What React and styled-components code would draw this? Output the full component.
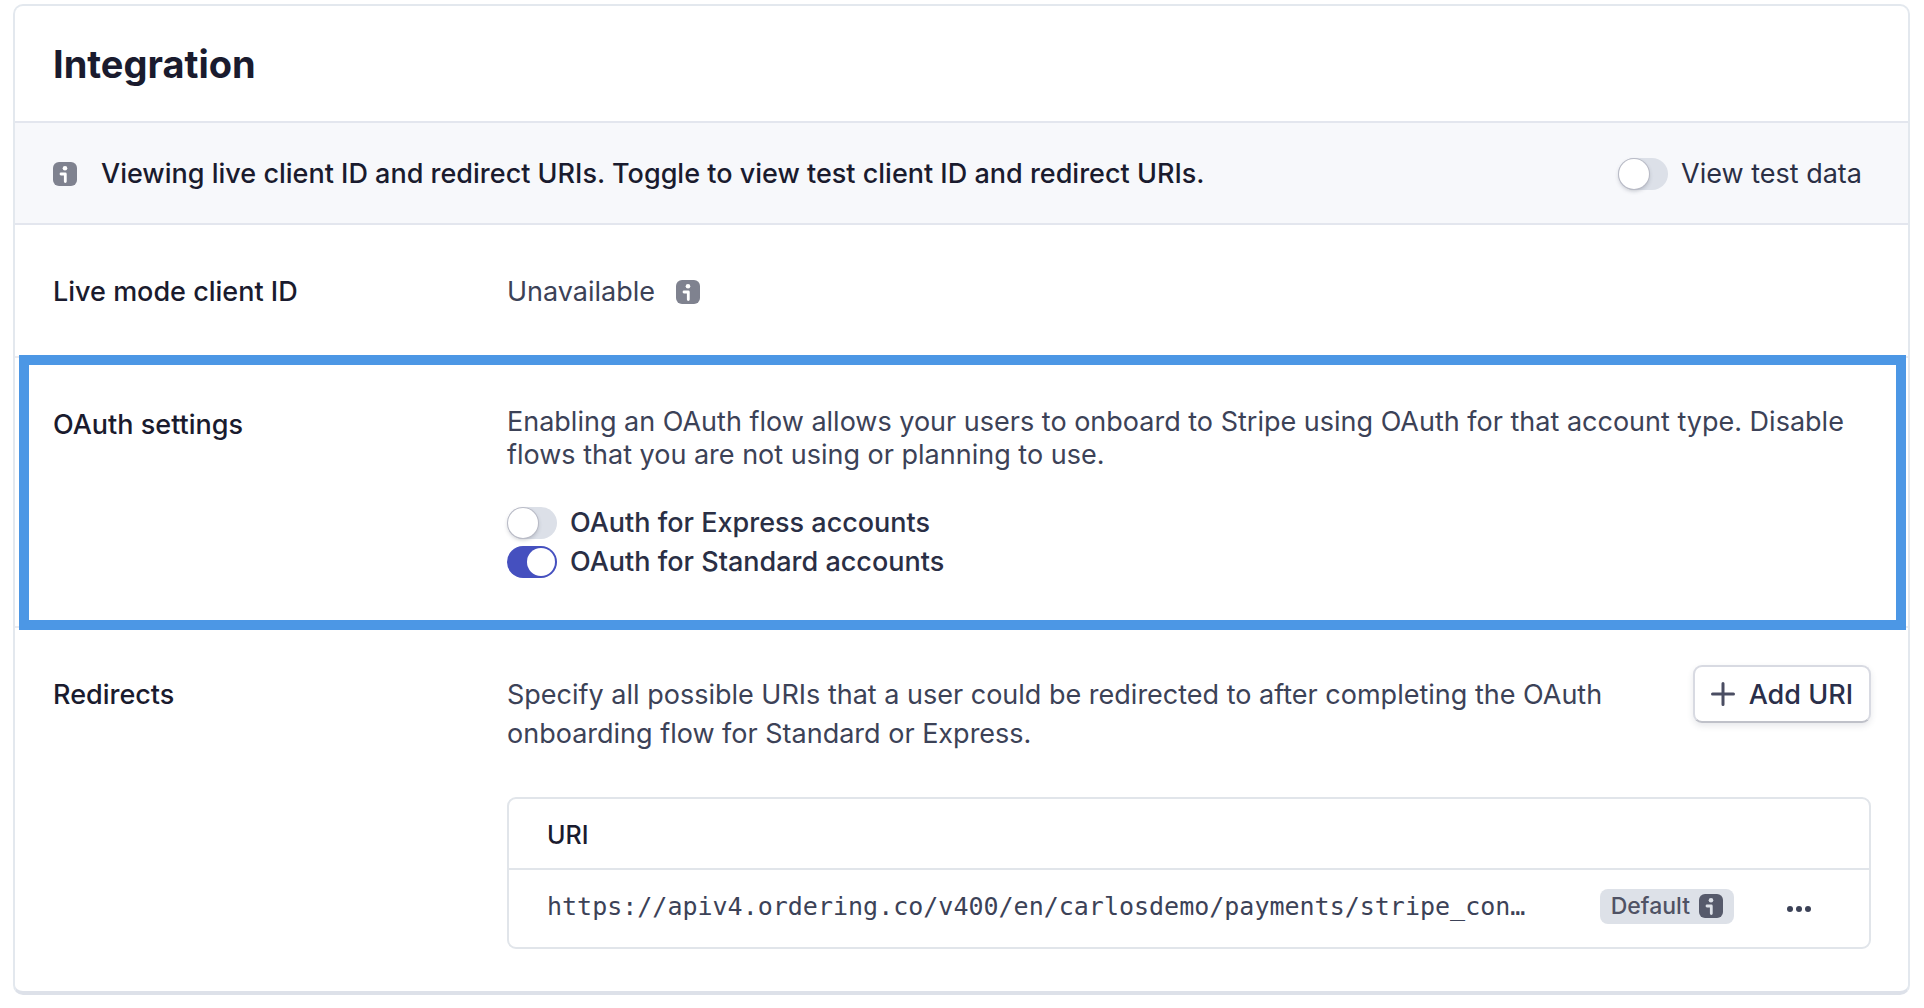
import React, { useState } from 'react';
import styled, { createGlobalStyle } from 'styled-components';

const GlobalStyle = createGlobalStyle`
*, *::before, *::after{
  box-sizing: border-box;
}
body{
  margin: 0;
  background: #ffffff;
  color: #3c4257;
  font-family: Inter, "Liberation Sans", sans-serif;
  font-size: 27px;
  line-height: 39px;
}
h1, h2, p{
  margin: 0;
}
`
const Page = styled.main`
padding: 4px 14px 12px 13px;
`
const Card = styled.section`
border: 2px solid #e3e8ee;
border-bottom: 4px solid #dde1e9;
border-radius: 10px;
`
const Header = styled.header`
padding: 35px 38px 33px;
`
const Title = styled.h1`
color: #1a1b2e;
font-size: 38px;
font-weight: 700;
line-height: 47px;
`
const Notice = styled.div`
display: flex;
align-items: center;
gap: 24px;
padding: 31px 46px 30px 38px;
border-top: 2px solid #e3e6ee;
border-bottom: 2px solid #e3e6ee;
background: #f7f8fb;
color: #1a1b2e;
`
const NoticeText = styled.p`
flex: 1;
font-weight: 500;
`
const Row = styled.section`
position: relative;
display: grid;
grid-template-columns: 454px 1fr;
padding: 47px 37px 45px 38px;

& + &{
  border-top: 2px solid #e9ebf1;
}
&:last-child{
  padding-bottom: 42px;
}
`
const Highlight = styled.div`
position: absolute;
z-index: 1;
inset: -3px 2px -4px 4px;
border: 10px solid #4c97e5;
pointer-events: none;
`
const Label = styled.h2`
color: #1a1b2e;
font-size: 27px;
font-weight: 500;
line-height: 39px;
`
const Value = styled.div`
display: flex;
align-items: center;
gap: 21px;
`
const Text = styled.p`
line-height: ${(props) => (props.$tight ? '33px' : '39px')};
`
const Toggles = styled.div`
display: flex;
flex-direction: column;
margin-top: 32px;
`
const ToggleLabel = styled.label`
display: flex;
align-items: center;
gap: 13px;
color: #2a2f45;
font-weight: ${(props) => (props.$strong ? 500 : 400)};
cursor: pointer;
`
const Switch = styled.input`
appearance: none;
flex: none;
display: flex;
width: 50px;
height: 32px;
margin: 0;
padding: 1px;
border-radius: 16px;
background: #dce0e8;
cursor: pointer;

&::before{
  content: '';
  width: 30px;
  height: 30px;
  border-radius: 50%;
  background: #ffffff;
  box-shadow: 0 0 0 1px #b9bbc6, 0 2px 4px rgba(60, 66, 87, 0.3);
}
&:checked{
  justify-content: flex-end;
  padding: 2px;
  background: #4550bf;
}
&:checked::before{
  width: 28px;
  height: 28px;
  box-shadow: none;
}
`
const Intro = styled.div`
display: flex;
align-items: flex-start;
justify-content: space-between;
gap: 60px;
`
const AddButton = styled.button`
flex: none;
display: flex;
align-items: center;
gap: 14px;
height: 58px;
margin: -10px 0;
padding: 0 16px;
border: 2px solid #d8dae2;
border-bottom-color: #bfc1c9;
border-radius: 9px;
background: #ffffff;
box-shadow: 0 3px 6px rgba(60, 66, 87, 0.12);
color: #2a2f4a;
font: inherit;
font-weight: 500;
cursor: pointer;
`
const TableFrame = styled.div`
margin-top: 44px;
border: 2px solid #e1e5ea;
border-radius: 9px;
`
const Table = styled.table`
width: 100%;
border-collapse: collapse;
text-align: left;

th, td{
  padding: 0;
}
th{
  height: 70px;
  padding: 4px 0 0 38px;
  color: #1a1b2e;
  font-size: 25px;
  font-weight: 500;
}
td{
  height: 78px;
  padding-bottom: 5px;
  border-top: 2px solid #e1e5ea;
}
`
const Uri = styled.td`
&&{
  padding-left: 38px;
}
font-family: "DejaVu Sans Mono", "Liberation Mono", monospace;
font-size: 25px;
white-space: nowrap;
`
const Actions = styled.div`
display: flex;
align-items: center;
justify-content: flex-end;
gap: 49px;
padding-right: 54px;
`
const Badge = styled.span`
display: flex;
align-items: center;
gap: 9px;
height: 35px;
padding: 0 11px;
border-radius: 8px;
background: #dde1e8;
color: #4f5264;
font-size: 23px;
font-weight: 500;
`
const MoreButton = styled.button`
display: flex;
padding: 10px 4px 4px;
border: 0;
background: none;
cursor: pointer;
`
const Icon = styled.svg`
display: block;
flex: none;
`


const InfoIcon = ({ color, mark }) => (
  <Icon width="24" height="24" viewBox="0 0 24 24" aria-hidden="true">
    <rect width="24" height="24" rx="6" fill={color} />
    <circle cx="12" cy="6.2" r="2.3" fill={mark} />
    <path d="M8 12h4.3v7.5" fill="none" stroke={mark} strokeWidth="2.8" strokeLinecap="round" strokeLinejoin="round" />
  </Icon>
);

const Toggle = ({ id, label, strong, initial }) => {
  const [on, setOn] = useState(initial);

  return <ToggleLabel htmlFor={id} $strong={strong}>
    <Switch id={id} type="checkbox" role="switch" checked={on} onChange={() => setOn(!on)} />
    {label}
  </ToggleLabel>;
};

const App = () => {
  return <>
    <GlobalStyle />
    <Page>
      <Card>
        <Header>
          <Title>Integration</Title>
        </Header>

        <Notice>
          <InfoIcon color="#7f828f" mark="#ffffff" />
          <NoticeText>Viewing live client ID and redirect URIs. Toggle to view test client ID and redirect URIs.</NoticeText>
          <Toggle id="test-data" label="View test data" initial={false} />
        </Notice>

        <Row>
          <Label>Live mode client ID</Label>
          <Value>
            Unavailable
            <InfoIcon color="#7f828f" mark="#ffffff" />
          </Value>
        </Row>

        <Row>
          <Label>OAuth settings</Label>
          <div>
            <Text $tight>
              Enabling an OAuth flow allows your users to onboard to Stripe using OAuth for that account type. Disable flows that you are not using or planning to use.
            </Text>
            <Toggles>
              <Toggle id="oauth-express" label="OAuth for Express accounts" strong initial={false} />
              <Toggle id="oauth-standard" label="OAuth for Standard accounts" strong initial={true} />
            </Toggles>
          </div>
          <Highlight />
        </Row>

        <Row>
          <Label>Redirects</Label>
          <div>
            <Intro>
              <Text>
                Specify all possible URIs that a user could be redirected to after completing the OAuth onboarding flow for Standard or Express.
              </Text>
              <AddButton type="button">
                <Icon width="24" height="24" viewBox="0 0 24 24" aria-hidden="true">
                  <path d="M12 1.5v21M1.5 12h21" stroke="#4a4d62" strokeWidth="3" strokeLinecap="round" />
                </Icon>
                Add URI
              </AddButton>
            </Intro>
            <TableFrame>
              <Table>
                <thead>
                  <tr>
                    <th colSpan={2} scope="col">URI</th>
                  </tr>
                </thead>
                <tbody>
                  <tr>
                    <Uri>https://apiv4.ordering.co/v400/en/carlosdemo/payments/stripe_con…</Uri>
                    <td>
                      <Actions>
                        <Badge>
                          Default
                          <InfoIcon color="#565a6b" mark="#dde1e8" />
                        </Badge>
                        <MoreButton type="button" aria-label="More options">
                          <Icon width="24" height="8" viewBox="0 0 24 8" aria-hidden="true">
                            <circle cx="3" cy="4" r="3" fill="#3c4257" />
                            <circle cx="12" cy="4" r="3" fill="#3c4257" />
                            <circle cx="21" cy="4" r="3" fill="#3c4257" />
                          </Icon>
                        </MoreButton>
                      </Actions>
                    </td>
                  </tr>
                </tbody>
              </Table>
            </TableFrame>
          </div>
        </Row>
      </Card>
    </Page>
  </>;
};

export default App;
